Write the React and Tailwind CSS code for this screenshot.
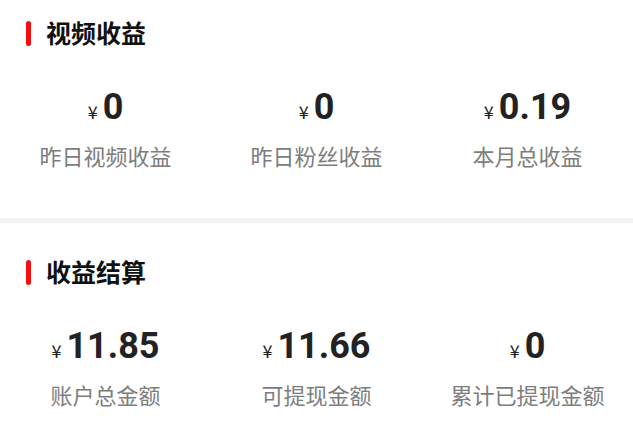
import React from "react";

const cjk = { fontFamily: '"Noto Sans CJK SC", "Noto Sans", sans-serif' };

function Stat({ value, label }) {
  return (
    <div className="flex flex-col items-center">
      <div className="flex items-baseline h-[40px] leading-[40px]">
        <span className="text-[18px] text-[#222] mr-[5px]" style={cjk}>¥</span>
        <span className="text-[36px] font-bold text-[#222] font-['Roboto',sans-serif] leading-[40px]">{value}</span>
      </div>
      <div className="mt-[13px] h-[30px] leading-[30px] text-[22px] text-[#7d7d7d] font-['Noto_Sans_CJK_SC',sans-serif]">
        {label}
      </div>
    </div>
  );
}

function Section({ title, stats, className }) {
  return (
    <div className={"bg-white " + className}>
      <div className="h-[66px] flex items-center pl-[26px]">
        <div className="w-[5px] h-[25px] rounded-full bg-[#f50d0d] mr-[15px]" />
        <div className="text-[25px] font-bold text-[#111] font-['Noto_Sans_CJK_SC',sans-serif] leading-[34px] -mt-[3px]">
          {title}
        </div>
      </div>
      <div className="grid grid-cols-3 mt-[21px]">
        {stats.map((s) => (
          <Stat key={s.label} value={s.value} label={s.label} />
        ))}
      </div>
    </div>
  );
}

export default function App() {
  return (
    <div className="w-[633px] h-[429px] bg-white overflow-hidden">
      <Section
        className="pb-[48px]"
        title="视频收益"
        stats={[
          { value: "0", label: "昨日视频收益" },
          { value: "0", label: "昨日粉丝收益" },
          { value: "0.19", label: "本月总收益" },
        ]}
      />
      <div className="h-[5px] bg-[#f4f4f4]" />
      <Section
        className="pt-[16px]"
        title="收益结算"
        stats={[
          { value: "11.85", label: "账户总金额" },
          { value: "11.66", label: "可提现金额" },
          { value: "0", label: "累计已提现金额" },
        ]}
      />
    </div>
  );
}
